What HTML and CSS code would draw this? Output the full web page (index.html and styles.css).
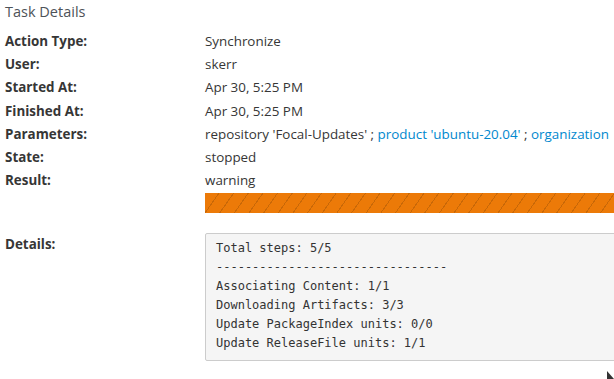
FILE: index.html
```html
<!DOCTYPE html>
<html lang="en">
<head>
    <meta charset="UTF-8">
    <link rel="stylesheet" href="styles.css">
    <title>Task Details</title>
</head>
<body>

<div id="task">
    <h4 class="title">Task Details</h4>

    <dl class="details">
        <dt>Action Type:</dt>
        <dd>Synchronize</dd>

        <dt>User:</dt>
        <dd>skerr</dd>

        <dt>Started At:</dt>
        <dd>Apr 30, 5:25 PM</dd>

        <dt>Finished At:</dt>
        <dd>Apr 30, 5:25 PM</dd>

        <dt>Parameters:</dt>
        <dd class="params">repository 'Focal-Updates' ; <a href="#">product 'ubuntu-20.04'</a> ; <a href="#">organization</a></dd>

        <dt>State:</dt>
        <dd>stopped</dd>

        <dt>Result:</dt>
        <dd>
            warning
            <div class="progress">
                <div class="bar" style="width: 100%;"></div>
            </div>
        </dd>

        <dt class="spaced">Details:</dt>
        <dd class="spaced">
<pre>Total steps: 5/5
--------------------------------
Associating Content: 1/1
Downloading Artifacts: 3/3
Update PackageIndex units: 0/0
Update ReleaseFile units: 1/1</pre>
        </dd>
    </dl>
</div>

<div class="cursor"></div>

</body>
</html>
```

FILE: styles.css
```css
body {
    margin: 0;
    font-family: "Open Sans", sans-serif;
    font-size: 13.4px;
    color: #363636;
    overflow: hidden;
    background: #fff;
}
#task {
    width: 800px;
    padding: 0 0 0 5px;
}
.title {
    margin: 0;
    padding-top: 2px;
    font-size: 14.5px;
    font-weight: normal;
    line-height: 20px;
    color: #4d5258;
}
.details {
    display: grid;
    grid-template-columns: 200px 1fr;
    row-gap: 3.2px;
    margin: 9px 0 0 0;
    line-height: 20px;
}
dt {
    font-weight: bold;
}
dd {
    margin: 0;
}
.params {
    white-space: nowrap;
}
a {
    color: #0088ce;
    text-decoration: none;
}
.progress {
    height: 20px;
    margin-top: 3px;
    background: #ededed;
}
.bar {
    height: 100%;
    background-color: #ec7a08;
    background-image: repeating-linear-gradient(
        -55deg,
        transparent 0px,
        transparent 11px,
        rgba(0, 0, 0, 0.15) 11px,
        rgba(0, 0, 0, 0.15) 12px
    );
}
.spaced {
    margin-top: 17px;
}
dt.spaced {
    padding-top: 1px;
}
pre {
    margin: 0;
    padding: 5px 10px 7px 10px;
    font-family: "DejaVu Sans Mono", monospace;
    font-size: 12px;
    line-height: 19px;
    color: #333;
    background: #f5f5f5;
    border: 1px solid #ccc;
    border-radius: 2px;
}
.cursor {
    position: absolute;
    left: 607px;
    top: 371px;
    width: 0;
    height: 0;
    border-left: 7px solid #333;
    border-top: 8px solid transparent;
}
```
